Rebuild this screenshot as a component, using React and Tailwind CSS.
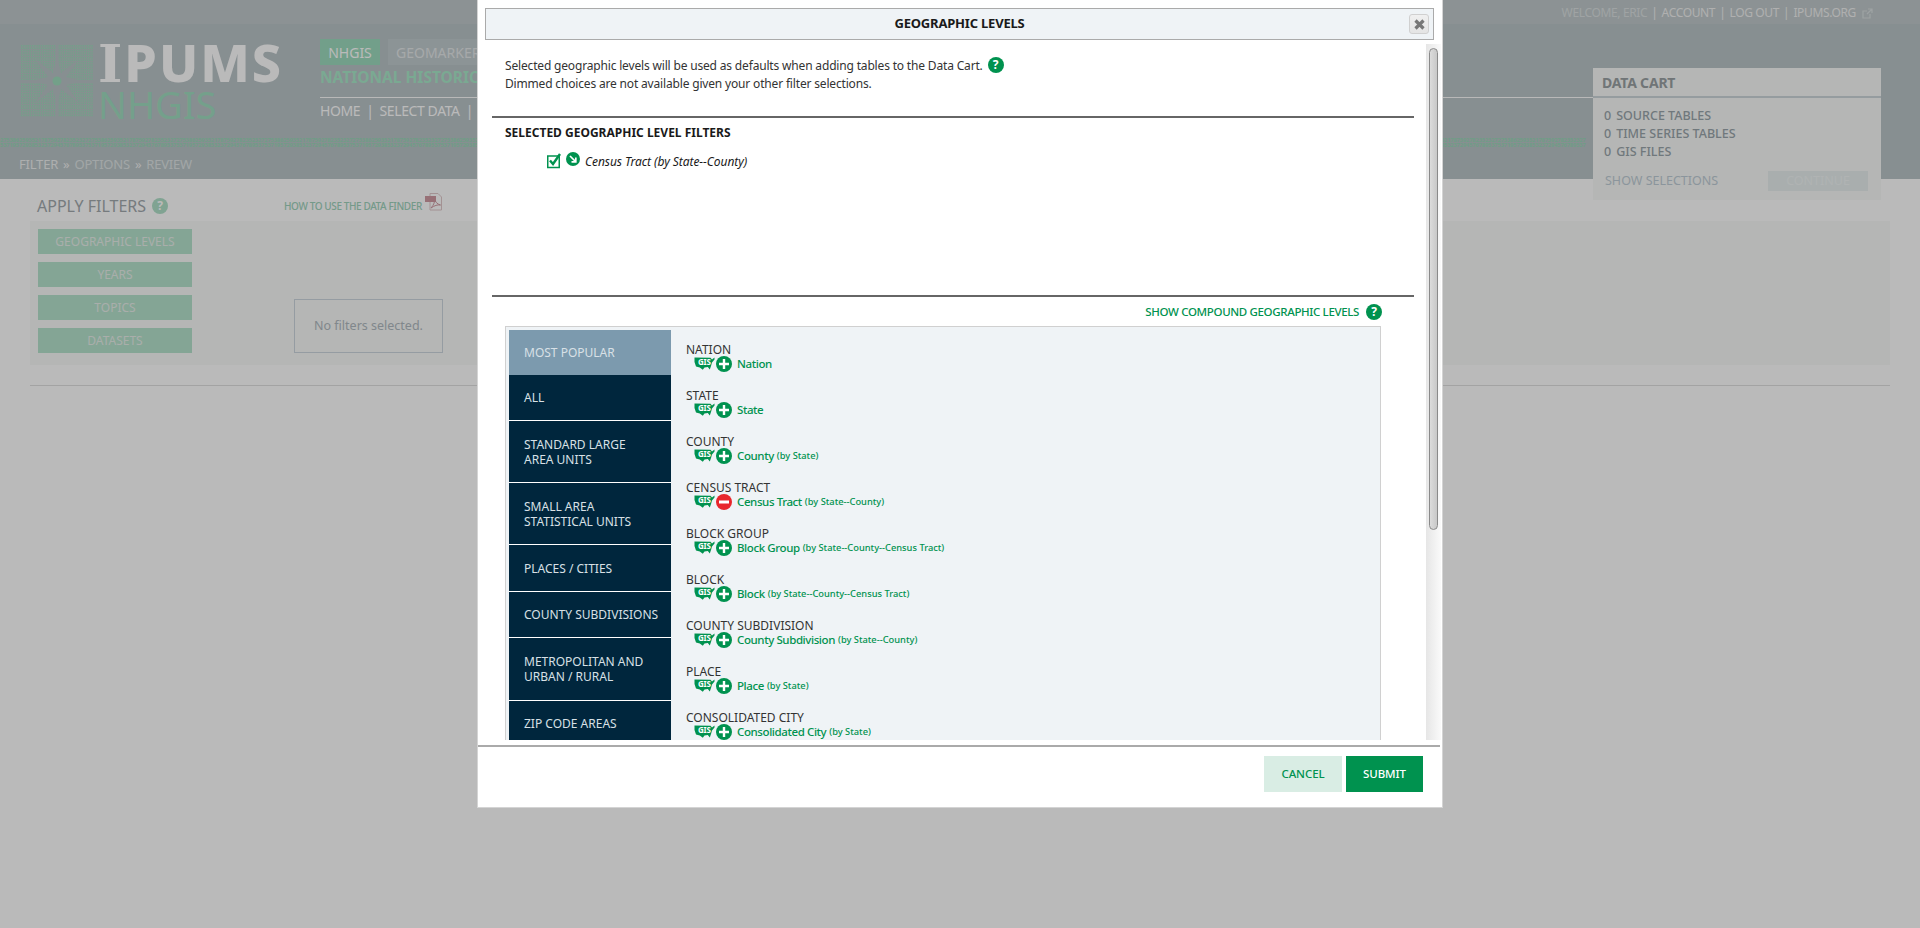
import React from "react";

const F = { fontFamily: '"Noto Sans", "Open Sans", sans-serif' };
const digits = "2753862593521787592782352327".repeat(18);
const digits2 = "5371957293853237294576789537".repeat(18);

function Help({ className = "" }) {
  return (
    <span className={"inline-flex items-center justify-center rounded-full bg-[#00924f] text-white font-bold text-[12px] leading-none w-4 h-4 shrink-0 " + className}>?</span>
  );
}

function LogoGrid() {
  const dots = [];
  for (let y = 0; y < 72; y += 2.4) {
    for (let x = 0; x < 72; x += 2.2) {
      dots.push(<rect key={x + "-" + y} x={x} y={y} width="1.300" height="1.600" fill="#9edcbc" />);
    }
  }
  return (
    <svg width="72" height="72" viewBox="0 0 72 72" className="shrink-0">
      {dots}
      <rect x="34.500" y="0" width="3" height="72" fill="#bac4c7" />
      <rect x="0" y="35" width="72" height="3" fill="#bac4c7" />
      <path d="M36 12 L40 28 L58 14 L45 32 L62 36 L45 40 L58 58 L40 44 L36 60 L32 44 L14 58 L27 40 L10 36 L27 32 L14 14 L32 28 Z" fill="#bac4c7" />
      <circle cx="36" cy="36" r="4.500" fill="#9edcbc" />
    </svg>
  );
}

function GisIcon() {
  return (
    <span className="relative w-[21px] h-[13px] shrink-0 inline-block">
      <svg width="21" height="13" viewBox="0 0 21 13" className="absolute left-0 top-0">
        <path d="M0.500 0.500 L16.500 0.800 L18 2.500 L20.500 0.500 L20.500 2.600 L18 5.500 L17 9 L15.800 12.500 L13.800 10 L10.500 10.500 L8.800 12.800 L5.800 10.500 L2 9.500 L0.500 5 Z" fill="#00924f" />
      </svg>
      <span className="absolute left-[4px] top-[0px] text-white font-bold text-[8px] leading-[10px] tracking-[-0.2px]">GIS</span>
    </span>
  );
}

function Circle({ minus }) {
  return (
    <svg width="16" height="16" viewBox="0 0 16 16" className="shrink-0">
      <circle cx="8" cy="8" r="8" fill={minus ? "#e8262c" : "#00924f"} />
      {minus ? (
        <rect x="3" y="6.500" width="10" height="3" fill="#fff" />
      ) : (
        <path d="M6.800 3h2.400v3.800H13v2.400H9.200V13H6.800V9.200H3V6.800h3.800z" fill="#fff" />
      )}
    </svg>
  );
}

const levels = [
  ["NATION", "Nation", ""],
  ["STATE", "State", ""],
  ["COUNTY", "County", "(by State)"],
  ["CENSUS TRACT", "Census Tract", "(by State--County)", true],
  ["BLOCK GROUP", "Block Group", "(by State--County--Census Tract)"],
  ["BLOCK", "Block", "(by State--County--Census Tract)"],
  ["COUNTY SUBDIVISION", "County Subdivision", "(by State--County)"],
  ["PLACE", "Place", "(by State)"],
  ["CONSOLIDATED CITY", "Consolidated City", "(by State)"],
];

const navItems = [
  ["MOST POPULAR", "h-[45px] bg-[#7c9aae]"],
  ["ALL", "h-[46px] border-b border-white"],
  ["STANDARD LARGE\nAREA UNITS", "h-[62px] border-b border-white"],
  ["SMALL AREA\nSTATISTICAL UNITS", "h-[62px] border-b border-white"],
  ["PLACES / CITIES", "h-[47px] border-b border-white"],
  ["COUNTY SUBDIVISIONS", "h-[46px] border-b border-white"],
  ["METROPOLITAN AND\nURBAN / RURAL", "h-[63px] border-b border-white"],
  ["ZIP CODE AREAS", "h-[46px] border-b border-white"],
];

function Modal() {
  return (
    <div className="absolute left-[477px] top-0 w-[966px] h-[808px] bg-white border border-[#d4d4d4] border-t-0 flex flex-col">
      <div className="h-[32px] mt-[8px] ml-[7px] mr-[8px] bg-[#eff3f6] border border-[#aaaaaa] flex items-center justify-center relative shrink-0">
        <span className="font-bold text-[13px] text-[#1a1a1a] tracking-[-0.2px]">GEOGRAPHIC LEVELS</span>
        <span className="absolute right-[4px] top-[5px] w-[20px] h-[20px] rounded-[3px] border border-[#d0d0d0] bg-gradient-to-b from-[#f0f0f0] to-[#e4e4e4] flex items-center justify-center">
          <svg width="11" height="11" viewBox="0 0 11 11"><path d="M1.500 1.500l8 8M9.500 1.500l-8 8" stroke="#777" strokeWidth="3.200" /></svg>
        </span>
      </div>
      <div className="h-[696px] mt-[4px] flex shrink-0 overflow-hidden">
        <div className="w-[947px] overflow-hidden shrink-0">
          <div className="pl-[27px] pt-[13px] text-[12px] leading-[18px] text-[#333] tracking-[-0.17px]">
            <div className="flex items-center gap-[5px] h-[18px]"><span>Selected geographic levels will be used as defaults when adding tables to the Data Cart.</span><Help className="-mt-[3px]" /></div>
            <div>Dimmed choices are not available given your other filter selections.</div>
          </div>
          <div className="ml-[14px] w-[922px] h-[2px] bg-[#666] mt-[23px]" />
          <div className="pl-[27px] pt-[7px] text-[12px] leading-[16px] font-bold text-[#1a1a1a]">SELECTED GEOGRAPHIC LEVEL FILTERS</div>
          <div className="pl-[69px] pt-[12px] h-[154px] flex items-start">
            <svg width="15" height="16" viewBox="0 0 15 16" className="shrink-0">
              <rect x="0.750" y="3" width="11.500" height="11.500" fill="none" stroke="#00924f" strokeWidth="1.500" />
              <path d="M3 7.500l3 3.500 7-10" fill="none" stroke="#00924f" strokeWidth="2.400" />
            </svg>
            <svg width="14" height="14" viewBox="0 0 14 14" className="ml-[4px] -mt-[1px] shrink-0">
              <circle cx="7" cy="7" r="7" fill="#00924f" />
              <path d="M4 4l5.500 5.500M9.800 5.500v4.300H5.500" fill="none" stroke="#fff" strokeWidth="1.700" />
            </svg>
            <span className="ml-[5px] mt-[1px] italic text-[12px] leading-[16px] text-[#1a1a1a] tracking-[-0.05px]">Census Tract (by State--County)</span>
          </div>
          <div className="ml-[14px] w-[922px] h-[2px] bg-[#666]" />
          <div className="h-[29px] flex items-center justify-end pr-[43px] gap-[7px]">
            <span className="text-[11.5px] text-[#00924f] font-medium tracking-[-0.35px]">SHOW COMPOUND GEOGRAPHIC LEVELS</span>
            <Help />
          </div>
          <div className="ml-[27px] w-[876px] border border-[#d0d0d0] bg-[#eff3f6] pl-[3px] pt-[3px] flex">
            <div className="w-[162px] shrink-0 bg-[#00263d] text-[#d8e0e6] text-[12px] leading-[15px]">
              {navItems.map(([t, c]) => (
                <div key={t} className={"flex items-center pl-[15px] whitespace-pre-line " + c}>{t}</div>
              ))}
            </div>
            <div className="pl-[15px] pt-[13px]">
              {levels.map(([h, n, s, m]) => (
                <div key={h} className="h-[46px]">
                  <div className="text-[12px] leading-[14px] text-[#333]">{h}</div>
                  <div className="flex items-center pl-[8px] -mt-[2px] h-[17px]">
                    <GisIcon />
                    <span className="ml-[1px]"><Circle minus={m} /></span>
                    <span className="ml-[5px] text-[#00924f] text-[11.5px] font-medium tracking-[-0.4px]">{n}</span>
                    {s && <span className="ml-[3px] text-[#00924f] text-[9.3px] font-medium">{s}</span>}
                  </div>
                </div>
              ))}
            </div>
          </div>
        </div>
        <div className="w-[15px] ml-[1px] shrink-0 bg-gradient-to-r from-[#e6e6e6] to-[#fafafa] pl-[3px] pt-[4px]">
          <div className="w-[9px] h-[482px] rounded-[5px] border border-[#8a8a8a] bg-gradient-to-r from-[#dcdcdc] to-[#c8c8c8]" />
        </div>
      </div>
      <div className="h-[2px] mt-[5px] mr-[2px] bg-[#aaaaaa] shrink-0" />
      <div className="flex justify-end gap-[4px] pr-[19px] pt-[9px]">
        <span className="w-[78px] h-[36px] bg-[#d9ede4] text-[#00924f] text-[11.5px] font-medium flex items-center justify-center tracking-[-0.1px]">CANCEL</span>
        <span className="w-[77px] h-[36px] bg-[#00924f] text-white text-[11.5px] font-medium flex items-center justify-center tracking-[-0.1px]">SUBMIT</span>
      </div>
    </div>
  );
}

function DataCart() {
  return (
    <div className="absolute left-[1593px] top-[68px] w-[288px] h-[132px] bg-[#f8faf8] text-[#9aa5ab]">
      <div className="h-[30px] pl-[9px] flex items-center text-[14px] font-bold tracking-[-0.2px] border-b-[2px] border-[#ccd6da] text-[#9aa1a4]">DATA CART</div>
      <div className="pl-[11px] pt-[9px] text-[12.5px] leading-[18px] font-medium">
        <div><span className="mr-[5px]">0</span>SOURCE TABLES</div>
        <div><span className="mr-[5px]">0</span>TIME SERIES TABLES</div>
        <div><span className="mr-[5px]">0</span>GIS FILES</div>
      </div>
      <div className="flex items-center justify-between pl-[12px] pr-[13px] mt-[10px] text-[12.5px] text-[#bfcdd6]">
        <span>SHOW SELECTIONS</span>
        <span className="w-[100px] h-[20px] bg-[#e8efef] text-[#f1f6f6] flex items-center justify-center">CONTINUE</span>
      </div>
    </div>
  );
}

function Page() {
  return (
    <div className="w-[1920px] h-[928px] bg-white relative overflow-hidden" style={F}>
      <header className="h-[179px] bg-[#bac4c7] flex flex-col">
        <div className="h-[24px] pt-[2px] bg-[#c0c9cb] flex items-center justify-end pr-[47px] text-[12px] text-[#f1f1f1] gap-[4px] tracking-[-0.35px]">
          <span className="text-[#dbe0e1]">WELCOME, ERIC</span><span>|</span><span>ACCOUNT</span><span>|</span><span>LOG OUT</span><span>|</span><span>IPUMS.ORG</span>
          <svg width="11" height="11" viewBox="0 0 11 11" className="ml-[2px]"><path d="M8 6v4H1V3h4M6 1h4v4M10 1L5 6" fill="none" stroke="#d8dfe0" strokeWidth="1.200" /></svg>
        </div>
        <div className="h-[113px] flex pl-[21px] pt-[21px] relative">
          <LogoGrid />
          <div className="ml-[5px] -mt-[5px]">
            <div className="h-[44px] text-[52px] leading-[44px] font-extrabold text-white tracking-[2px] whitespace-nowrap">
              <span style={{ fontFamily: '"DejaVu Serif", serif' }}>I</span>PUMS
            </div>
            <div className="h-[40px] text-[38px] leading-[40px] text-[#a0dcbf]">NHGIS</div>
          </div>
          <div className="absolute left-[320px] top-[15px] right-[325px]">
            <div className="flex gap-[8px] h-[26px]">
              <span className="w-[60px] bg-[#9ddbbe] text-white text-[14px] flex items-center justify-center">NHGIS</span>
              <span className="w-[100px] bg-[#c1cbce] text-[#e4e8e9] text-[14px] flex items-center pl-[8px]">GEOMARKER</span>
            </div>
            <div className="mt-[1px] text-[15.5px] leading-[22px] font-bold text-[#a8e8c8] whitespace-nowrap">NATIONAL HISTORICAL GEOGRAPHIC INFORMATION SYSTEM</div>
            <div className="h-px bg-[#fdfdfd] mt-[9px]" />
            <div className="mt-[2px] text-[14px] leading-[22px] text-white whitespace-nowrap flex gap-[6px] tracking-[-0.4px]"><span>HOME</span><span>|</span><span>SELECT DATA</span><span>|</span></div>
          </div>
        </div>
        <div className="h-[11px] pt-[1px] overflow-hidden whitespace-nowrap text-[5.5px] leading-[5px] font-bold text-[#98d8b8]">
          <div>{digits}</div><div>{digits2}</div>
        </div>
        <div className="flex-1 pt-[2px] flex items-center pl-[19px] text-[13px] gap-[5px] text-[#eef0f0] tracking-[-0.2px]">
          <span>FILTER</span><span>»</span><span className="text-[#dfe4e5]">OPTIONS</span><span>»</span><span className="text-[#dfe4e5]">REVIEW</span>
        </div>
      </header>
      <main className="px-[30px]">
        <div className="h-[42px] pt-[12px] flex items-center">
          <span className="pl-[7px] text-[16px] text-[#a2a9ad]">APPLY FILTERS</span>
          <span className="ml-[6px] w-4 h-4 rounded-full bg-[#b0e0c8] text-white text-[12px] font-bold flex items-center justify-center">?</span>
          <span className="ml-[116px] text-[10px] text-[#a0d3bc] font-medium tracking-[-0.4px]">HOW TO USE THE DATA FINDER</span>
          <svg width="17" height="18" viewBox="0 0 17 18" className="ml-[3px] -mt-[8px]"><path d="M5 .5h8l3.500 3.500v13H5z" fill="#fff" stroke="#e0c8ca" /><rect x="0" y="3" width="11" height="6" fill="#d09aa2" /><path d="M6 15c3-3 4-7 3.500-9 1 3 2.500 5 6 6-3-.5-6 .5-9.500 3z" fill="none" stroke="#d09aa2" /></svg>
        </div>
        <div className="h-[144px] bg-[#f8faf8] pl-[8px] pt-[8px] flex">
          <div className="w-[154px] flex flex-col gap-[8px]">
            {["GEOGRAPHIC LEVELS", "YEARS", "TOPICS", "DATASETS"].map((t) => (
              <div key={t} className="h-[25px] bg-[#b6e2cc] text-[#e8efeb] text-[12px] flex items-center justify-center">{t}</div>
            ))}
          </div>
          <div className="ml-[102px] mt-[70px] w-[149px] h-[54px] border border-[#ccd6de] flex items-center justify-center text-[12.5px] text-[#b0b9c0]">No filters selected.</div>
        </div>
        <div className="h-px bg-[#e0e0e0] mt-[20px]" />
      </main>
      <DataCart />
      <div className="absolute inset-0 bg-black/27" />
      <Modal />
    </div>
  );
}

export default function App() {
  return <Page />;
}
